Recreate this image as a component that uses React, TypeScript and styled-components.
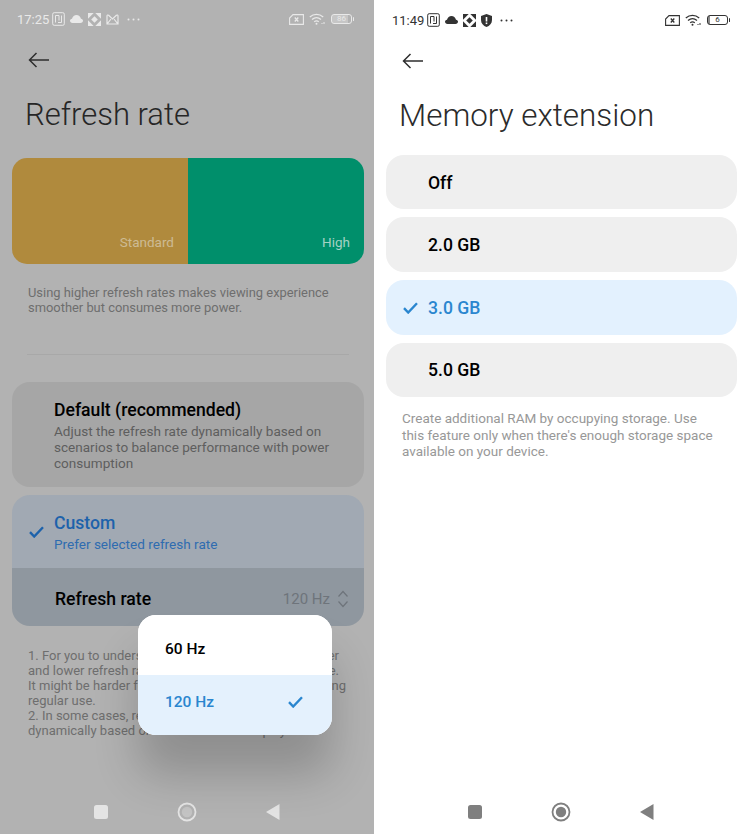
import React from "react";
import styled, { createGlobalStyle } from "styled-components";

const GlobalStyle = createGlobalStyle`
  html, body {
    margin: 0;
    padding: 0;
    background: #fff;
  }
  body {
    font-family: Roboto, "Liberation Sans", sans-serif;
  }
`;

const Screens = styled.div`
  display: flex;
  width: 750px;
  height: 834px;
  overflow: hidden;
`;

const Panel = styled.div<{ $dim?: boolean }>`
  position: relative;
  display: flex;
  flex-direction: column;
  width: ${(p) => (p.$dim ? "374px" : "375px")};
  margin-left: ${(p) => (p.$dim ? "0" : "1px")};
  height: 834px;
  background: ${(p) => (p.$dim ? "#b2b2b2" : "#ffffff")};
`;

const Status = styled.div<{ $dim?: boolean; $h: number }>`
  display: flex;
  align-items: center;
  height: ${(p) => p.$h}px;
  padding: 0 22px 0 17px;
  color: ${(p) => (p.$dim ? "#e9e9e9" : "#333333")};
  flex-shrink: 0;
`;

const Time = styled.span`
  font-size: 13px;
  margin-right: 3px;
`;

const StatusIcons = styled.div`
  display: flex;
  align-items: center;
  gap: 5px;
`;

const Spacer = styled.div`
  flex: 1;
`;

const Battery = styled.div<{ $level: number; $dim?: boolean }>`
  position: relative;
  box-sizing: border-box;
  width: 21px;
  height: 10px;
  margin-left: 1px;
  border: 1px solid currentColor;
  border-radius: 3px;
  font-size: 8px;
  line-height: 8px;
  text-align: center;
  background: linear-gradient(
    to right,
    ${(p) => (p.$dim ? "#c6c6c6" : "#8a8a8a")} ${(p) => p.$level}%,
    transparent ${(p) => p.$level}%
  );
  &::after {
    content: "";
    position: absolute;
    right: -3px;
    top: 2px;
    width: 1.5px;
    height: 4px;
    background: currentColor;
    border-radius: 1px;
  }
`;

const BackRow = styled.div<{ $top: number; $left: number }>`
  display: flex;
  align-items: center;
  height: 24px;
  margin-top: ${(p) => p.$top}px;
  padding-left: ${(p) => p.$left}px;
  color: #2e2e2e;
`;

const Title = styled.h1<{ $dim?: boolean; $size: number; $left: number }>`
  margin: 22.5px 0 0;
  padding-left: ${(p) => p.$left}px;
  font-size: ${(p) => p.$size}px;
  line-height: 40px;
  font-weight: 300;
  color: ${(p) => (p.$dim ? "#262626" : "#2b2b2b")};
`;

const Banner = styled.div`
  display: flex;
  height: 106px;
  margin: 23.5px 10px 0 12px;
  border-radius: 15px;
  overflow: hidden;
`;

const Rate = styled.div<{ $bg: string; $fg: string }>`
  flex: 1;
  display: flex;
  align-items: flex-end;
  justify-content: flex-end;
  padding: 0 14px 14px 0;
  background: ${(p) => p.$bg};
  color: ${(p) => p.$fg};
  font-size: 13.5px;
  line-height: 16px;
`;

const Hint = styled.p`
  margin: 21px 0 0;
  padding: 0 20px 0 28px;
  font-size: 12.9px;
  line-height: 15px;
  color: #6e6e6e;
`;

const Divider = styled.hr`
  height: 1px;
  margin: 39px 25px 0 27px;
  border: 0;
  background: #a8a8a8;
`;

const DefaultCard = styled.div`
  margin: 27px 10px 0 12px;
  padding: 18px 20px 16px 42px;
  border-radius: 18px;
  background: #a6a6a6;
`;

const CardTitle = styled.div<{ $color?: string }>`
  font-size: 17.6px;
  line-height: 20px;
  font-weight: 500;
  color: ${(p) => p.$color || "#000"};
`;

const CardText = styled.div<{ $color: string }>`
  margin-top: 3px;
  font-size: 13.55px;
  line-height: 16px;
  color: ${(p) => p.$color};
`;

const CustomCard = styled.div`
  margin: 8px 10px 0 12px;
  border-radius: 18px;
  overflow: hidden;
`;

const CustomHead = styled.div`
  display: flex;
  align-items: center;
  height: 73px;
  padding-left: 17px;
  background: #a1a9b3;
  color: #1d62ab;
`;

const CustomCopy = styled.div`
  margin-left: 10px;
  padding-top: 2px;
`;

const CustomRow = styled.div`
  display: flex;
  align-items: center;
  height: 58px;
  padding: 4px 15px 0 43px;
  box-sizing: border-box;
  background: #8f979f;
`;

const RowValue = styled.span`
  font-size: 15px;
  color: #6e747b;
  margin-right: 7px;
`;

const Notes = styled.div`
  margin: 22px 0 0;
  padding: 0 28px;
  font-size: 13px;
  line-height: 15px;
  color: #6e6e6e;
`;

const NoteLine = styled.div<{ $inset?: number }>`
  display: flex;
  justify-content: space-between;
  padding-right: ${(p) => p.$inset || 0}px;
  white-space: nowrap;
`;

const Popup = styled.div`
  position: absolute;
  left: 138px;
  top: 615px;
  width: 194px;
  border-radius: 18px;
  background: #fff;
  overflow: hidden;
`;

const PopupShadow = styled.div`
  position: absolute;
  left: 138px;
  top: 615px;
  width: 194px;
  height: 120px;
  border-radius: 18px;
  box-shadow: 0 40px 45px rgba(0, 0, 0, 0.2);
`;

const PopupItem = styled.div<{ $active?: boolean }>`
  display: flex;
  align-items: center;
  justify-content: space-between;
  box-sizing: border-box;
  height: 60px;
  padding: ${(p) => (p.$active ? "0 29px 6px 27px" : "8px 29px 0 27px")};
  font-size: 15.5px;
  font-weight: 500;
  background: ${(p) => (p.$active ? "#e4f1fd" : "#fff")};
  color: ${(p) => (p.$active ? "#2a86cf" : "#000")};
`;

const Options = styled.div`
  display: flex;
  flex-direction: column;
  gap: 8px;
  margin: 19.2px 13px 0 11px;
`;

const Option = styled.div<{ $active?: boolean }>`
  display: flex;
  align-items: center;
  box-sizing: border-box;
  height: 54.67px;
  padding: 1px 0 0 ${(p) => (p.$active ? "17px" : "42px")};
  border-radius: 18px;
  font-size: 17.6px;
  font-weight: 500;
  background: ${(p) => (p.$active ? "#e3f1fe" : "#efefef")};
  color: ${(p) => (p.$active ? "#2a86cf" : "#000")};
  svg {
    margin-right: 10px;
  }
`;

const Help = styled.p`
  margin: 13px 0 0;
  padding: 0 32px 0 27px;
  font-size: 13.5px;
  line-height: 16.3px;
  color: #989898;
`;

const Nav = styled.div<{ $shift: number }>`
  display: flex;
  align-items: center;
  justify-content: center;
  gap: 69px;
  margin-top: auto;
  padding: 0 ${(p) => p.$shift}px 10px 0;
  height: 24px;
`;

const Arrow = () => (
  <svg width="22" height="16" viewBox="0 0 22 16" fill="none" stroke="currentColor" strokeWidth="1.5">
    <path d="M21 8H1.5M8.5 1L1.5 8l7 7" />
  </svg>
);

const Check = ({ size, color }: { size: number; color: string }) => (
  <svg width={size} height={size * 0.8} viewBox="0 0 15 12" fill="none" stroke={color} strokeWidth="2.4">
    <path d="M1 6.2l4.2 4.3L14 1.2" />
  </svg>
);

const Chevrons = () => (
  <svg width="12" height="18" viewBox="0 0 12 18" fill="none" stroke="#6e747b" strokeWidth="1.2">
    <path d="M1.5 6.5L6 1.5l4.5 5M1.5 11.5L6 16.5l4.5-5" />
  </svg>
);

const NfcIcon = () => (
  <svg width="13" height="14" viewBox="0 0 13 14" fill="none" stroke="currentColor" strokeWidth="1">
    <rect x="0.7" y="0.7" width="11.6" height="12.6" rx="1.5" />
    <path d="M3.5 10.5V3.5h3.5v5M9.5 3.5v7H6" />
  </svg>
);

const CloudIcon = () => (
  <svg width="13" height="8" viewBox="0 0 13 8" fill="currentColor">
    <path d="M2.5 8C1 8 0 7 0 5.8c0-1.1.8-2 2-2.1C2.6 1.6 4.4 0 6.5 0s3.9 1.6 4.5 3.7c1.2.1 2 1 2 2.1C13 7 12 8 10.5 8z" />
  </svg>
);

const KiteIcon = () => (
  <svg width="13" height="13" viewBox="0 0 13 13" fill="currentColor">
    <path d="M0 0H5.7L0 5.7zM13 0V5.7L7.3 0zM13 13H7.3L13 7.3zM0 13V7.3L5.7 13zM6.5 3.2L9.8 6.5 6.5 9.8 3.2 6.5z" />
  </svg>
);

const MailIcon = () => (
  <svg width="13" height="11" viewBox="0 0 13 11" fill="none" stroke="currentColor" strokeWidth="1.2">
    <path d="M1 10V2c0-1 .9-1.3 1.6-.7L6.5 5l3.9-3.7c.7-.6 1.600-.3 1.600.7v8zM1.500 9.500L5 5M11.500 9.500L8 5" />
  </svg>
);

const ShieldIcon = () => (
  <svg width="11" height="13" viewBox="0 0 11 13">
    <path d="M5.5 0L11 2v4c0 3.5-2.3 5.8-5.5 7C2.3 11.8 0 9.5 0 6V2z" fill="currentColor" />
    <rect x="4.7" y="3" width="1.6" height="4.5" fill="#fff" />
    <rect x="4.7" y="8.5" width="1.6" height="1.6" fill="#fff" />
  </svg>
);

const DotsIcon = styled.svg`
  margin-left: 3px;
`;

const Dots = () => (
  <DotsIcon width="13" height="3" viewBox="0 0 13 3" fill="currentColor">
    <circle cx="1.5" cy="1.5" r="1" />
    <circle cx="6.5" cy="1.5" r="1" />
    <circle cx="11.5" cy="1.5" r="1" />
  </DotsIcon>
);

const SimIcon = () => (
  <svg width="15" height="11" viewBox="0 0 15 11" fill="none" stroke="currentColor" strokeWidth="1.1">
    <path d="M4 .6h10.4v9.8H.6V4z" />
    <path d="M5.8 3.5l3.5 4M9.3 3.5l-3.5 4" strokeWidth="1.3" />
  </svg>
);

const WifiIcon = () => (
  <svg width="16" height="12" viewBox="0 0 16 12" fill="none" stroke="currentColor" strokeWidth="1.3">
    <path d="M.8 4C4.8.6 10.2.6 14.2 4M3 6.5c2.8-2.3 6.2-2.3 9 0M5.2 8.700c1.5-1.100 3.100-1.100 4.600 0" />
    <circle cx="7.5" cy="10.8" r="1" fill="currentColor" stroke="none" />
    <path d="M13 11v-1M15 11V9" strokeWidth="1" />
  </svg>
);

const NavButtons = ({ dim }: { dim?: boolean }) => {
  const fill = dim ? "#e4e4e4" : "#7f7f7f";
  return (
    <Nav $shift={dim ? 0 : 3}>
      <svg width="14" height="14" viewBox="0 0 14 14">
        <rect width="14" height="14" rx="2.5" fill={fill} />
      </svg>
      <svg width="20" height="20" viewBox="0 0 20 20" fill="none">
        <circle cx="10" cy="10" r="8.5" stroke={fill} strokeWidth="1.8" />
        <circle cx="10" cy="10" r="5.2" fill={dim ? "#c4c4c4" : fill} />
      </svg>
      <svg width="14" height="16" viewBox="0 0 14 16">
        <path d="M13.5 0v16L0 8z" fill={fill} />
      </svg>
    </Nav>
  );
};

const options = ["Off", "2.0 GB", "3.0 GB", "5.0 GB"];

export default function App() {
  return (
    <>
      <GlobalStyle />
      <Screens>
        <Panel $dim>
          <Status $dim $h={38}>
            <Time>17:25</Time>
            <StatusIcons>
              <NfcIcon />
              <CloudIcon />
              <KiteIcon />
              <MailIcon />
              <Dots />
            </StatusIcons>
            <Spacer />
            <StatusIcons>
              <SimIcon />
              <WifiIcon />
              <Battery $dim $level={86}>86</Battery>
            </StatusIcons>
          </Status>
          <BackRow $top={10} $left={28}>
            <Arrow />
          </BackRow>
          <Title $dim $size={31} $left={25}>
            Refresh rate
          </Title>
          <Banner>
            <Rate $bg="#b08a3d" $fg="#cdbb94">
              Standard
            </Rate>
            <Rate $bg="#008f6b" $fg="#a5d2c4">
              High
            </Rate>
          </Banner>
          <Hint>
            Using higher refresh rates makes viewing experience
            <br />
            smoother but consumes more power.
          </Hint>
          <Divider />
          <DefaultCard>
            <CardTitle>Default (recommended)</CardTitle>
            <CardText $color="#5e5e5e">
              Adjust the refresh rate dynamically based on scenarios to balance performance with power consumption
            </CardText>
          </DefaultCard>
          <CustomCard>
            <CustomHead>
              <Check size={15} color="#1d62ab" />
              <CustomCopy>
                <CardTitle $color="#1d62ab">Custom</CardTitle>
                <CardText $color="#2f6cb0">Prefer selected refresh rate</CardText>
              </CustomCopy>
            </CustomHead>
            <CustomRow>
              <CardTitle>Refresh rate</CardTitle>
              <Spacer />
              <RowValue>120 Hz</RowValue>
              <Chevrons />
            </CustomRow>
          </CustomCard>
          <Notes>
            <NoteLine $inset={7}>
              <span>1. For you to understand</span>
              <span>higher</span>
            </NoteLine>
            <NoteLine $inset={7}>
              <span>and lower refresh rates</span>
              <span>page.</span>
            </NoteLine>
            <NoteLine>
              <span>It might be harder for you</span>
              <span>during</span>
            </NoteLine>
            <NoteLine>regular use.</NoteLine>
            <NoteLine>2. In some cases, refresh rate</NoteLine>
            <NoteLine $inset={60}>
              <span>dynamically based on</span>
              <span>display</span>
            </NoteLine>
          </Notes>
          <NavButtons dim />
          <PopupShadow />
          <Popup>
            <PopupItem>60 Hz</PopupItem>
            <PopupItem $active>
              120 Hz
              <Check size={15} color="#2a86cf" />
            </PopupItem>
          </Popup>
        </Panel>
        <Panel>
          <Status $h={40}>
            <Time>11:49</Time>
            <StatusIcons>
              <NfcIcon />
              <CloudIcon />
              <KiteIcon />
              <ShieldIcon />
              <Dots />
            </StatusIcons>
            <Spacer />
            <StatusIcons>
              <SimIcon />
              <WifiIcon />
              <Battery $level={8}>6</Battery>
            </StatusIcons>
          </Status>
          <BackRow $top={9} $left={27}>
            <Arrow />
          </BackRow>
          <Title $size={31.4} $left={24}>
            Memory extension
          </Title>
          <Options>
            {options.map((label) => (
              <Option key={label} $active={label === "3.0 GB"}>
                {label === "3.0 GB" && <Check size={15} color="#2a86cf" />}
                {label}
              </Option>
            ))}
          </Options>
          <Help>
            Create additional RAM by occupying storage. Use this feature only when there's enough storage space
            available on your device.
          </Help>
          <NavButtons />
        </Panel>
      </Screens>
    </>
  );
}
